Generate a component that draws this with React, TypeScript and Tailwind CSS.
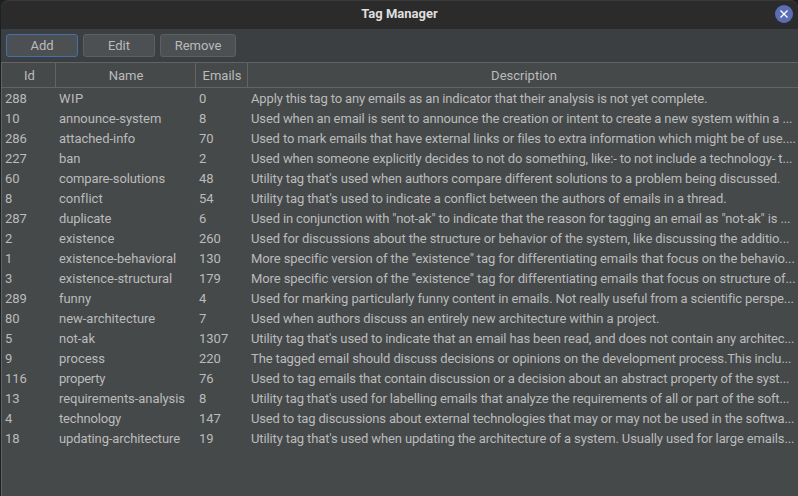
import React, { useLayoutEffect, useRef, useState } from "react";

// id, name, name width, emails, description, description width
type Tag = [string, string, number, string, string, number];

const tags: Tag[] = [
  ["288", "WIP", 24.5, "0", "Apply this tag to any emails as an indicator that their analysis is not yet complete.", 456.3],
  ["10", "announce-system", 102.3, "8", "Used when an email is sent to announce the creation or intent to create a new system within a ...", 541.3],
  ["286", "attached-info", 76.2, "70", "Used to mark emails that have external links or files to extra information which might be of use....", 544.3],
  ["227", "ban", 21.5, "2", "Used when someone explicitly decides to not do something, like:- to not include a technology- t...", 541.3],
  ["60", "compare-solutions", 106, "48", "Utility tag that's used when authors compare different solutions to a problem being discussed.", 529.3],
  ["8", "conflict", 43.5, "54", "Utility tag that's used to indicate a conflict between the authors of emails in a thread.", 475.3],
  ["287", "duplicate", 52.3, "6", "Used in conjunction with \"not-ak\" to indicate that the reason for tagging an email as \"not-ak\" is ...", 539.3],
  ["2", "existence", 55.3, "260", "Used for discussions about the structure or behavior of the system, like discussing the additio...", 538.3],
  ["1", "existence-behavioral", 117, "130", "More specific version of the \"existence\" tag for differentiating emails that focus on the behavio...", 543.3],
  ["3", "existence-structural", 113.2, "179", "More specific version of the \"existence\" tag for differentiating emails that focus on structure of...", 544],
  ["289", "funny", 32, "4", "Used for marking particularly funny content in emails. Not really useful from a scientific perspe...", 542.3],
  ["80", "new-architecture", 96.2, "7", "Used when authors discuss an entirely new architecture within a project.", 408.3],
  ["5", "not-ak", 36, "1307", "Utility tag that's used to indicate that an email has been read, and does not contain any architec...", 543.3],
  ["9", "process", 46, "220", "The tagged email should discuss decisions or opinions on the development process.This inclu...", 540.3],
  ["116", "property", 46, "76", "Used to tag emails that contain discussion or a decision about an abstract property of the syst...", 538.3],
  ["13", "requirements-analysis", 126, "8", "Utility tag that's used for labelling emails that analyze the requirements of all or part of the soft...", 538.3],
  ["4", "technology", 62, "147", "Used to tag discussions about external technologies that may or may not be used in the softwa...", 543.3],
  ["18", "updating-architecture", 121, "19", "Utility tag that's used when updating the architecture of a system. Usually used for large emails...", 543.3],
];

const columns = "grid grid-cols-[54px_140px_52px_1fr]";

// Spreads a line's letters so that the line takes up the given width.
function FittedText({ text, width }: { text: string; width: number }) {
  const ref = useRef<HTMLSpanElement>(null);
  const [spacing, setSpacing] = useState(0);
  useLayoutEffect(() => {
    const el = ref.current;
    if (!el) return;
    el.style.letterSpacing = "0px";
    const natural = el.getBoundingClientRect().width;
    const next = (width - natural) / text.length;
    el.style.letterSpacing = next + "px";
    setSpacing(next);
  }, [text, width]);
  return (
    <span ref={ref} className="inline-block" style={{ letterSpacing: spacing + "px" }}>
      {text}
    </span>
  );
}

export default function App() {
  return (
    <div className="h-[496px] w-[798px] overflow-hidden bg-[#1b2022] pl-px font-['Roboto',sans-serif] text-[13px] text-[#bbbbbb]">
      <div className="flex h-full flex-col overflow-hidden rounded-t-[8px] bg-[#3c3f41]">
        <header className="flex h-[29px] shrink-0 items-start rounded-t-[8px] border-t border-[#383838] bg-[#2b2b2b]">
          <h1 className="ml-[23px] flex-1 text-center font-bold leading-[26px] text-[#dfdfdf]">Tag Manager</h1>
          <button className="mr-[5px] mt-[4px] flex size-[18px] shrink-0 items-center justify-center rounded-full bg-[#5a6db5]" aria-label="Close">
            <svg viewBox="0 0 8 8" className="size-2" fill="none" stroke="#fff" strokeWidth="1.3">
              <path d="M.5.5l7 7M7.5.5l-7 7" />
            </svg>
          </button>
        </header>
        <div className="flex h-[33px] shrink-0 gap-[5px] pl-[5px] pt-[5px]">
          <button className="h-[23px] w-[72px] rounded-[3px] border border-[#4470ad] bg-[#4c5052]">Add</button>
          <button className="h-[23px] w-[72px] rounded-[3px] border border-[#5e6060] bg-[#4c5052]">Edit</button>
          <button className="h-[23px] w-[76px] rounded-[3px] border border-[#5e6060] bg-[#4c5052]">Remove</button>
        </div>
        <main className="min-h-0 flex-1 border-l border-t border-[#616365] bg-[#45494a]">
          <div className={columns + " h-[25px] border-b border-[#616365] text-center leading-[25px]"}>
            <div className="border-r border-[#616365] pl-[2px]">Id</div>
            <div className="border-r border-[#616365] pl-px">Name</div>
            <div className="border-r border-[#616365] pl-px">Emails</div>
            <div className="pl-[2px]">Description</div>
          </div>
          {tags.map(([id, name, nameWidth, emails, description, descriptionWidth]) => (
            <div key={id} className={columns + " h-5 whitespace-nowrap leading-[21px]"}>
              <div className="pl-[3px]">{id}</div>
              <div className="pl-[3px]">
                <FittedText text={name} width={nameWidth} />
              </div>
              <div className="pl-[3px]">{emails}</div>
              <div className="pl-[3px]">
                <FittedText text={description} width={descriptionWidth} />
              </div>
            </div>
          ))}
        </main>
      </div>
    </div>
  );
}
